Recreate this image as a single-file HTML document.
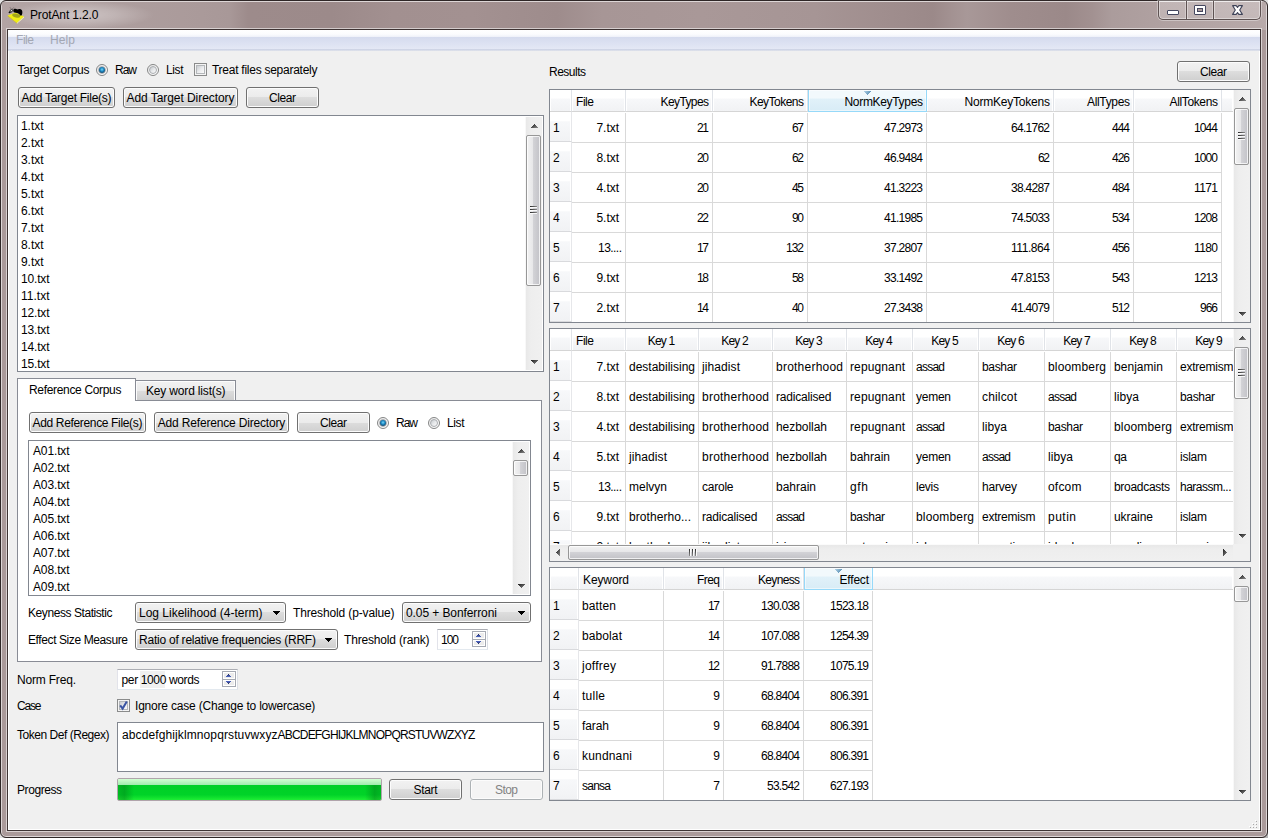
<!DOCTYPE html>
<html lang="en"><head><meta charset="utf-8"><title>ProtAnt 1.2.0</title>
<style>
html,body{margin:0;padding:0;}
body{width:1268px;height:838px;position:relative;overflow:hidden;background:#e2e2e2;font:12px/14px "Liberation Sans",sans-serif;color:#000;}
div,span,svg{position:absolute;box-sizing:border-box;}
.t{white-space:pre;line-height:14px;font-size:12px;}
/* window frame */
.frame{border:1px solid #2e2626;border-radius:6px;background:#aa9a9a;box-shadow:inset 0 0 0 1px rgba(255,255,255,.6);overflow:hidden;}
.tbar{background:linear-gradient(90deg,#b3a4a4 0px,#ae9f9f 100px,#aa9a9a 200px,#a89898 228px,#9d8b8b 246px,#9c8a8a 330px,#a29090 390px,#a39191 470px,#a08e8e 520px,#9e8c8c 555px,#a79696 600px,#a99898 700px,#a69595 813px,#a08e8e 880px,#9b8989 931px,#a39292 950px,#a89898 965px,#a49393 985px,#9f8d8d 1010px,#9b8989 1064px,#a29191 1090px,#ab9c9c 1110px,#b0a1a1 1160px,#b8aaaa 1268px);}
.client{background:#f0f0f0;border:1px solid #fff;box-shadow:0 0 0 1px #3e3434,0 0 0 2px rgba(255,255,255,.55);}
.menubar{background:linear-gradient(#fff 0,#fbfcfe 20%,#eef1f9 33%,#d5dbee 34%,#dde2f2 66%,#e4e8f5 90%,#bfc6da 95%,#f4f5f8 100%);}
.capbox{border:1px solid #5e5252;border-top:none;border-radius:0 0 5px 5px;background:linear-gradient(rgba(255,255,255,.22) 0,rgba(255,255,255,.18) 100%);background-clip:padding-box;box-shadow:inset 0 0 0 1px rgba(255,255,255,.4),0 0 0 1px rgba(255,255,255,.35);}
/* button */
.btn{border:1px solid #707070;border-radius:3px;background:linear-gradient(#f2f2f2 0,#ebebeb 50%,#dddddd 50%,#cfcfcf 100%);box-shadow:inset 0 0 0 1px #fcfcfc;}
.btn.dis{border-color:#adb2b5;background:#f4f4f4;box-shadow:inset 0 0 0 1px #fcfcfc;}
.list{border:1px solid #828790;background:#fff;}
.field{border:1px solid #e3e9ef;border-top-color:#abadb3;border-left-color:#e2e3ea;border-right-color:#dbdfe6;background:#fff;}
/* scrollbar */
.sbv{background:linear-gradient(90deg,#f8f8f8 0,#f8f8f8 1px,#e8e8e8 1px,#eeeeee 6px,#f0f0f0 100%);}
.sbh{background:linear-gradient(#f8f8f8 0,#f8f8f8 1px,#e8e8e8 1px,#eeeeee 6px,#f0f0f0 100%);}
.thv{border:1px solid #979797;border-radius:2px;background:linear-gradient(90deg,#f3f3f3 0,#e6e6e8 48%,#d2d2d6 50%,#c2c2c7 100%);box-shadow:inset 0 0 0 1px rgba(255,255,255,.75);}
.thh{border:1px solid #979797;border-radius:2px;background:linear-gradient(#f3f3f3 0,#e6e6e8 48%,#d2d2d6 50%,#c2c2c7 100%);box-shadow:inset 0 0 0 1px rgba(255,255,255,.75);}
/* tabs */
.pane{border:1px solid #898c95;background:#fff;}
.tabsel{border:1px solid #898c95;border-bottom:none;background:#fff;}
.tab{border:1px solid #898c95;border-bottom:none;background:linear-gradient(#f2f2f2 0,#ebebeb 50%,#dddddd 50%,#cfcfcf 100%);box-shadow:inset 1px 1px 0 0 #fcfcfc,inset -1px 0 0 0 #fcfcfc;}
/* table */
.tbl{border:1px solid #828790;background:#fff;overflow:hidden;}
.hd{background:linear-gradient(#fff 0,#fff 40%,#f7f8fa 41%,#f1f2f4 100%);border-right:1px solid #e0e3e8;border-bottom:1px solid #d5d5d5;box-shadow:inset -1px 0 0 0 #fff, inset 1px 0 0 0 #fff;}
.hdsel{background:linear-gradient(#f2f9fc 0,#f2f9fc 40%,#e1f1f9 41%,#d8ecf6 100%);border:1px solid #96d9f9;border-top:none;box-shadow:inset 0 0 0 1px rgba(255,255,255,.5);}
.rh{background:linear-gradient(#fff 0,#fff 32%,#f7f8fa 33%,#f1f2f4 100%);border-right:1px solid #e6e7ea;border-bottom:1px solid #d9dadd;box-shadow:inset -1px 0 0 0 #fff;}
.gv{background:#d9d9d9;width:1px;}
.gh{background:#d9d9d9;height:1px;}
.prog{border:1px solid #b0a4ab;border-radius:2px;background:#e6e6e6;overflow:hidden;}
.pf{left:0;top:0;right:0;bottom:0;background:linear-gradient(#d2ffd2 0,#b9f5bf 14%,#a4ebb0 27%,#00cf26 29%,#00d328 75%,#0fe02e 88%,#1fee35 100%);}
.pl{left:0;top:6px;width:16px;bottom:0;background:linear-gradient(90deg,rgba(0,110,20,.25),rgba(0,110,20,.4) 40%,rgba(0,110,20,0));}
.pr{right:0;top:6px;width:16px;bottom:0;background:linear-gradient(270deg,rgba(0,110,20,.25),rgba(0,110,20,.4) 40%,rgba(0,110,20,0));}

</style></head>
<body>
<svg width="0" height="0" style="left:0;top:0"><defs><linearGradient id="ag" x1="0" y1="0" x2="1" y2="1"><stop offset="0" stop-color="#1c1c1c"/><stop offset="1" stop-color="#8c8c8c"/></linearGradient><linearGradient id="sg" x1="0" y1="0" x2="0" y2="1"><stop offset="0" stop-color="#232a55"/><stop offset="1" stop-color="#4f6ad0"/></linearGradient><linearGradient id="sg2" x1="0" y1="0" x2="0" y2="1"><stop offset="0" stop-color="#4f6ad0"/><stop offset="1" stop-color="#232a55"/></linearGradient><linearGradient id="hg" x1="0" y1="0" x2="1" y2="0.4"><stop offset="0" stop-color="#b4d3e6"/><stop offset="1" stop-color="#5a90b6"/></linearGradient></defs></svg>
<div class="" style="left:1258px;top:828px;width:10px;height:10px;background:#b4b4b4;"></div>
<div class="frame" style="left:0px;top:0px;width:1268px;height:838px;"><div class="tbar" style="left:1px;top:1px;width:1264px;height:28px;"></div></div>
<div class="" style="left:2px;top:30px;width:4px;height:802px;background:#aa9a9a;"></div>
<div class="" style="left:1262px;top:30px;width:4px;height:802px;background:#aa9a9a;"></div>
<div class="" style="left:6px;top:832px;width:1256px;height:4px;background:#aa9a9a;"></div>
<div class="capbox" style="left:1158px;top:1px;width:103px;height:19px;"></div>
<div class="" style="left:1186px;top:1px;width:1px;height:18px;background:#5e5252;"></div>
<div class="" style="left:1187px;top:1px;width:1px;height:18px;background:rgba(255,255,255,.4);"></div>
<div class="" style="left:1185px;top:1px;width:1px;height:18px;background:rgba(255,255,255,.3);"></div>
<div class="" style="left:1213px;top:1px;width:1px;height:18px;background:#5e5252;"></div>
<div class="" style="left:1214px;top:1px;width:1px;height:18px;background:rgba(255,255,255,.4);"></div>
<div class="" style="left:1212px;top:1px;width:1px;height:18px;background:rgba(255,255,255,.3);"></div>
<div class="" style="left:1167px;top:10px;width:12px;height:5px;background:#fff;border:1px solid #45475e;border-radius:1px;"></div>
<div class="" style="left:1194px;top:5px;width:12px;height:10px;border:1px solid #45475e;border-radius:1px;background:#fff;"></div>
<div class="" style="left:1197px;top:8px;width:6px;height:4px;border:1px solid #45475e;background:#ac9c9c;"></div>
<svg style="left:1232px;top:5px" width="11" height="10" viewBox="0 0 11 10"><polygon points="0.6,0.6 4.2,0.6 5.5,2.5 6.8,0.6 10.4,0.6 7.7,5 10.4,9.4 6.8,9.4 5.5,7.5 4.2,9.4 0.6,9.4 3.3,5" fill="#fff" stroke="#3f4358" stroke-width="1.1" stroke-linejoin="round"/></svg>
<div class="" style="left:4px;top:1px;width:150px;height:28px;background:radial-gradient(closest-side,rgba(255,255,255,.38) 0,rgba(255,255,255,.22) 50%,rgba(255,255,255,0) 100%);"></div>
<svg style="left:4px;top:3px" width="26" height="24" viewBox="0 0 26 24"><defs><filter id="ib" x="-20%" y="-20%" width="140%" height="140%"><feGaussianBlur stdDeviation="0.35"/></filter></defs><g filter="url(#ib)"><polygon points="3.7,12.6 11.5,9.6 20,13.4 12.9,19.9" fill="#f0ee18"/><polygon points="3.7,12.6 12.9,19.9 12.9,20.6 3.7,13.3" fill="#d8c010"/><polygon points="12.9,19.9 20,13.4 20,14.6 12.9,20.8" fill="#f3ef9a"/><ellipse cx="12.2" cy="12.7" rx="4.1" ry="1.9" transform="rotate(12 12.2 12.7)" fill="#a3a61e"/><path d="M9.3 7.2 C9.6 5.6 12 5.4 13.2 6.6 C14.6 5.6 17.6 5.8 18.2 8 C18.6 9.6 18.2 11.6 17.6 12.4 L16.2 12.4 C15.4 10.8 13.6 10 11.6 9.8 C10 9.6 9.1 8.6 9.3 7.2Z" fill="#050505"/><ellipse cx="7.1" cy="8" rx="2.4" ry="1.5" transform="rotate(-42 7.1 8)" fill="#3a3a3a"/><ellipse cx="7.4" cy="7.6" rx="1.1" ry="0.55" transform="rotate(-42 7.4 7.6)" fill="#e8e8e8"/><circle cx="5.4" cy="9.4" r="0.75" fill="#0a0a0a"/><path d="M7.6 6.4 L6 4.3 M8.4 6 L9.6 4.5" stroke="#4a4040" stroke-width="0.5" fill="none"/></g><path d="M13.6 19.9 L19.6 14.4" stroke="#fff" stroke-width="0.7" stroke-dasharray="0.7 1.1" fill="none" opacity=".9"/></svg>
<span class="t" style="left:30px;top:8px;letter-spacing:-0.13px;">ProtAnt 1.2.0</span>
<div class="client" style="left:8px;top:30px;width:1252px;height:800px;"></div>
<div class="menubar" style="left:8px;top:30px;width:1252px;height:21px;"></div>
<span class="t" style="left:16px;top:33px;letter-spacing:-0.45px;color:#a3a7b3;">File</span>
<span class="t" style="left:50px;top:33px;letter-spacing:0.1px;color:#a3a7b3;">Help</span>
<span class="t" style="left:17.5px;top:63px;letter-spacing:-0.28px;">Target Corpus</span>
<div class="" style="left:96px;top:64px;width:12px;height:12px;border-radius:50%;border:1px solid #858686;background:linear-gradient(135deg,#e8e8e8 0,#f6f6f6 50%,#ffffff 100%);"></div>
<div class="" style="left:98px;top:66px;width:8px;height:8px;border-radius:50%;border:1px solid #a9acb0;background:linear-gradient(135deg,#c4c8cc 0,#e6e8ea 50%,#fbfbfb 100%);"></div>
<div class="" style="left:99px;top:67px;width:6px;height:6px;border-radius:50%;background:radial-gradient(circle at 50% 42%,#79d6f8 0,#1f8cc6 38%,#103f62 78%,#0b2c45 100%);"></div>
<span class="t" style="left:115px;top:63px;letter-spacing:-1.01px;">Raw</span>
<div class="" style="left:147px;top:64px;width:12px;height:12px;border-radius:50%;border:1px solid #858686;background:linear-gradient(135deg,#e8e8e8 0,#f6f6f6 50%,#ffffff 100%);"></div>
<div class="" style="left:149px;top:66px;width:8px;height:8px;border-radius:50%;border:1px solid #a9acb0;background:linear-gradient(135deg,#c4c8cc 0,#e6e8ea 50%,#fbfbfb 100%);"></div>
<span class="t" style="left:166px;top:63px;letter-spacing:-0.4px;">List</span>
<div class="" style="left:194px;top:63px;width:13px;height:13px;border:1px solid #8a8b8b;background:#f4f4f4;"></div>
<div class="" style="left:196px;top:65px;width:9px;height:9px;border:1px solid #b4b7ba;background:linear-gradient(135deg,#c9ccd0 0,#e9eaec 50%,#fbfbfb 100%);"></div>
<span class="t" style="left:212px;top:63px;letter-spacing:-0.26px;">Treat files separately</span>
<div class="btn" style="left:18px;top:87px;width:97px;height:21px;"></div>
<span class="t" style="left:21.5px;top:91px;letter-spacing:-0.26px;">Add Target File(s)</span>
<div class="btn" style="left:123px;top:87px;width:115px;height:21px;"></div>
<span class="t" style="left:126.5px;top:91px;letter-spacing:-0.06px;">Add Target Directory</span>
<div class="btn" style="left:246px;top:87px;width:73px;height:21px;"></div>
<span class="t" style="left:269.0px;top:91px;letter-spacing:-0.42px;">Clear</span>
<div class="list" style="left:17px;top:115px;width:527px;height:257px;"></div>
<span class="t" style="left:21px;top:119px;letter-spacing:-0.05px;">1.txt</span>
<span class="t" style="left:21px;top:136px;letter-spacing:-0.05px;">2.txt</span>
<span class="t" style="left:21px;top:153px;letter-spacing:-0.05px;">3.txt</span>
<span class="t" style="left:21px;top:170px;letter-spacing:-0.05px;">4.txt</span>
<span class="t" style="left:21px;top:187px;letter-spacing:-0.05px;">5.txt</span>
<span class="t" style="left:21px;top:204px;letter-spacing:-0.05px;">6.txt</span>
<span class="t" style="left:21px;top:221px;letter-spacing:-0.05px;">7.txt</span>
<span class="t" style="left:21px;top:238px;letter-spacing:-0.05px;">8.txt</span>
<span class="t" style="left:21px;top:255px;letter-spacing:-0.05px;">9.txt</span>
<span class="t" style="left:21px;top:272px;letter-spacing:-0.17px;">10.txt</span>
<span class="t" style="left:21px;top:289px;letter-spacing:0.01px;">11.txt</span>
<span class="t" style="left:21px;top:306px;letter-spacing:-0.17px;">12.txt</span>
<span class="t" style="left:21px;top:323px;letter-spacing:-0.17px;">13.txt</span>
<span class="t" style="left:21px;top:340px;letter-spacing:-0.17px;">14.txt</span>
<span class="t" style="left:21px;top:357px;letter-spacing:-0.17px;">15.txt</span>
<div class="sbv" style="left:525px;top:117px;width:17px;height:253px;"></div>
<svg style="left:531px;top:124px" width="7" height="4" viewBox="0 0 7 4" shape-rendering="crispEdges"><path d="M3 0h1v1h-1z M2 1h3v1h-3z M1 2h5v1h-5z M0 3h7v1h-7z" fill="url(#ag)"/></svg>
<svg style="left:531px;top:360px" width="7" height="4" viewBox="0 0 7 4" shape-rendering="crispEdges"><path d="M0 0h7v1h-7z M1 1h5v1h-5z M2 2h3v1h-3z M3 3h1v1h-1z" fill="url(#ag)"/></svg>
<div class="thv" style="left:526px;top:135px;width:15px;height:151px;"></div>
<div class="" style="left:530px;top:206px;width:7px;height:1px;background:linear-gradient(90deg,#2a2a2a,#8a8a8a);"></div>
<div class="" style="left:530px;top:207px;width:7px;height:1px;background:rgba(255,255,255,.85);"></div>
<div class="" style="left:530px;top:209px;width:7px;height:1px;background:linear-gradient(90deg,#2a2a2a,#8a8a8a);"></div>
<div class="" style="left:530px;top:210px;width:7px;height:1px;background:rgba(255,255,255,.85);"></div>
<div class="" style="left:530px;top:212px;width:7px;height:1px;background:linear-gradient(90deg,#2a2a2a,#8a8a8a);"></div>
<div class="" style="left:530px;top:213px;width:7px;height:1px;background:rgba(255,255,255,.85);"></div>
<div class="pane" style="left:17px;top:400px;width:525px;height:262px;"></div>
<div class="tabsel" style="left:17px;top:378px;width:119px;height:23px;"></div>
<div class="tab" style="left:135px;top:380px;width:101px;height:20px;"></div>
<span class="t" style="left:29px;top:383px;letter-spacing:-0.33px;">Reference Corpus</span>
<span class="t" style="left:146px;top:384px;letter-spacing:-0.17px;">Key word list(s)</span>
<div class="btn" style="left:29px;top:412px;width:117px;height:21px;"></div>
<span class="t" style="left:32.5px;top:416px;letter-spacing:-0.34px;">Add Reference File(s)</span>
<div class="btn" style="left:154px;top:412px;width:135px;height:21px;"></div>
<span class="t" style="left:157.8px;top:416px;letter-spacing:-0.18px;">Add Reference Directory</span>
<div class="btn" style="left:297px;top:412px;width:73px;height:21px;"></div>
<span class="t" style="left:320.0px;top:416px;letter-spacing:-0.42px;">Clear</span>
<div class="" style="left:377px;top:417px;width:12px;height:12px;border-radius:50%;border:1px solid #858686;background:linear-gradient(135deg,#e8e8e8 0,#f6f6f6 50%,#ffffff 100%);"></div>
<div class="" style="left:379px;top:419px;width:8px;height:8px;border-radius:50%;border:1px solid #a9acb0;background:linear-gradient(135deg,#c4c8cc 0,#e6e8ea 50%,#fbfbfb 100%);"></div>
<div class="" style="left:380px;top:420px;width:6px;height:6px;border-radius:50%;background:radial-gradient(circle at 50% 42%,#79d6f8 0,#1f8cc6 38%,#103f62 78%,#0b2c45 100%);"></div>
<span class="t" style="left:396px;top:416px;letter-spacing:-1.01px;">Raw</span>
<div class="" style="left:428px;top:417px;width:12px;height:12px;border-radius:50%;border:1px solid #858686;background:linear-gradient(135deg,#e8e8e8 0,#f6f6f6 50%,#ffffff 100%);"></div>
<div class="" style="left:430px;top:419px;width:8px;height:8px;border-radius:50%;border:1px solid #a9acb0;background:linear-gradient(135deg,#c4c8cc 0,#e6e8ea 50%,#fbfbfb 100%);"></div>
<span class="t" style="left:447px;top:416px;letter-spacing:-0.4px;">List</span>
<div class="list" style="left:28px;top:440px;width:503px;height:156px;"></div>
<span class="t" style="left:33px;top:444px;letter-spacing:-0.14px;">A01.txt</span>
<span class="t" style="left:33px;top:461px;letter-spacing:-0.14px;">A02.txt</span>
<span class="t" style="left:33px;top:478px;letter-spacing:-0.14px;">A03.txt</span>
<span class="t" style="left:33px;top:495px;letter-spacing:-0.14px;">A04.txt</span>
<span class="t" style="left:33px;top:512px;letter-spacing:-0.14px;">A05.txt</span>
<span class="t" style="left:33px;top:529px;letter-spacing:-0.14px;">A06.txt</span>
<span class="t" style="left:33px;top:546px;letter-spacing:-0.14px;">A07.txt</span>
<span class="t" style="left:33px;top:563px;letter-spacing:-0.14px;">A08.txt</span>
<span class="t" style="left:33px;top:580px;letter-spacing:-0.14px;">A09.txt</span>
<div class="sbv" style="left:512px;top:442px;width:17px;height:152px;"></div>
<svg style="left:518px;top:449px" width="7" height="4" viewBox="0 0 7 4" shape-rendering="crispEdges"><path d="M3 0h1v1h-1z M2 1h3v1h-3z M1 2h5v1h-5z M0 3h7v1h-7z" fill="url(#ag)"/></svg>
<svg style="left:518px;top:584px" width="7" height="4" viewBox="0 0 7 4" shape-rendering="crispEdges"><path d="M0 0h7v1h-7z M1 1h5v1h-5z M2 2h3v1h-3z M3 3h1v1h-1z" fill="url(#ag)"/></svg>
<div class="thv" style="left:513px;top:460px;width:15px;height:16px;"></div>
<span class="t" style="left:28px;top:606px;letter-spacing:-0.43px;">Keyness Statistic</span>
<div class="btn" style="left:135px;top:602px;width:151px;height:21px;"></div>
<span class="t" style="left:139px;top:606px;">Log Likelihood (4-term)</span>
<svg style="left:273px;top:611px" width="7" height="4" viewBox="0 0 7 4" shape-rendering="crispEdges"><path d="M0 0h7v1h-7z M1 1h5v1h-5z M2 2h3v1h-3z M3 3h1v1h-1z" fill="#000"/></svg>
<span class="t" style="left:293px;top:606px;letter-spacing:-0.14px;">Threshold (p-value)</span>
<div class="btn" style="left:402px;top:602px;width:129px;height:21px;"></div>
<span class="t" style="left:406px;top:606px;letter-spacing:-0.09px;">0.05 + Bonferroni</span>
<svg style="left:518px;top:611px" width="7" height="4" viewBox="0 0 7 4" shape-rendering="crispEdges"><path d="M0 0h7v1h-7z M1 1h5v1h-5z M2 2h3v1h-3z M3 3h1v1h-1z" fill="#000"/></svg>
<span class="t" style="left:28px;top:633px;letter-spacing:-0.4px;">Effect Size Measure</span>
<div class="btn" style="left:135px;top:629px;width:203px;height:21px;"></div>
<span class="t" style="left:139px;top:633px;letter-spacing:-0.23px;">Ratio of relative frequencies (RRF)</span>
<svg style="left:325px;top:638px" width="7" height="4" viewBox="0 0 7 4" shape-rendering="crispEdges"><path d="M0 0h7v1h-7z M1 1h5v1h-5z M2 2h3v1h-3z M3 3h1v1h-1z" fill="#000"/></svg>
<span class="t" style="left:344px;top:633px;letter-spacing:-0.17px;">Threshold (rank)</span>
<div class="field" style="left:437px;top:629px;width:51px;height:21px;"></div>
<div class="" style="left:472px;top:631px;width:14px;height:9px;border:1px solid #a5a9b2;background:#ececec;box-shadow:inset 0 0 0 1px #fff;"></div>
<div class="" style="left:472px;top:639px;width:14px;height:8px;border:1px solid #a5a9b2;background:#ececec;box-shadow:inset 0 0 0 1px #fff;"></div>
<svg style="left:476px;top:634px" width="5" height="3" viewBox="0 0 5 3" shape-rendering="crispEdges"><path d="M2 0h1v1h-1z M1 1h3v1h-3z M0 2h5v1h-5z" fill="url(#sg)"/></svg>
<svg style="left:476px;top:641px" width="5" height="3" viewBox="0 0 5 3" shape-rendering="crispEdges"><path d="M0 0h5v1h-5z M1 1h3v1h-3z M2 2h1v1h-1z" fill="url(#sg2)"/></svg>
<span class="t" style="left:441px;top:633px;letter-spacing:-1.02px;">100</span>
<span class="t" style="left:17px;top:673px;letter-spacing:-0.19px;">Norm Freq.</span>
<div class="field" style="left:117px;top:669px;width:121px;height:21px;"></div>
<div class="" style="left:222px;top:671px;width:14px;height:9px;border:1px solid #a5a9b2;background:#ececec;box-shadow:inset 0 0 0 1px #fff;"></div>
<div class="" style="left:222px;top:679px;width:14px;height:8px;border:1px solid #a5a9b2;background:#ececec;box-shadow:inset 0 0 0 1px #fff;"></div>
<svg style="left:226px;top:674px" width="5" height="3" viewBox="0 0 5 3" shape-rendering="crispEdges"><path d="M2 0h1v1h-1z M1 1h3v1h-3z M0 2h5v1h-5z" fill="url(#sg)"/></svg>
<svg style="left:226px;top:681px" width="5" height="3" viewBox="0 0 5 3" shape-rendering="crispEdges"><path d="M0 0h5v1h-5z M1 1h3v1h-3z M2 2h1v1h-1z" fill="url(#sg2)"/></svg>
<div class="" style="left:140px;top:671px;width:25px;height:17px;background:#f0f0f0;"></div>
<span class="t" style="left:121.5px;top:673px;letter-spacing:-0.36px;">per 1000 words</span>
<span class="t" style="left:17px;top:699px;letter-spacing:-1.17px;">Case</span>
<div class="" style="left:117px;top:699px;width:13px;height:13px;border:1px solid #8a8b8b;background:#f4f4f4;"></div>
<div class="" style="left:119px;top:701px;width:9px;height:9px;border:1px solid #b4b7ba;background:linear-gradient(135deg,#c9ccd0 0,#e9eaec 50%,#fbfbfb 100%);"></div>
<svg style="left:117px;top:699px" width="13" height="13" viewBox="0 0 13 13"><path d="M3.2 6.4 L5.6 9.6 L9.8 2.6" fill="none" stroke="#3b55a3" stroke-width="2"/></svg>
<span class="t" style="left:135px;top:699px;letter-spacing:-0.2px;">Ignore case (Change to lowercase)</span>
<span class="t" style="left:17px;top:728px;letter-spacing:-0.47px;">Token Def (Regex)</span>
<div class="list" style="left:117px;top:722px;width:427px;height:50px;"></div>
<span class="t" style="left:122px;top:728px;letter-spacing:0.11px;">abcdefghijklmnopqrstuvwxyz</span>
<span class="t" style="left:277.5px;top:728px;letter-spacing:-0.8px;">ABCDEFGHIJKLMNOPQRSTUVWZXYZ</span>
<span class="t" style="left:17px;top:783px;letter-spacing:-0.43px;">Progress</span>
<div class="prog" style="left:117px;top:778px;width:265px;height:23px;"><div class="pf"></div><div class="pl"></div><div class="pr"></div></div>
<div class="btn" style="left:389px;top:779px;width:73px;height:21px;"></div>
<span class="t" style="left:413.5px;top:783px;letter-spacing:-0.34px;">Start</span>
<div class="btn dis" style="left:470px;top:779px;width:73px;height:21px;"></div>
<span class="t" style="left:495.0px;top:783px;letter-spacing:-0.56px;color:#838383;">Stop</span>
<span class="t" style="left:549px;top:65px;letter-spacing:-0.5px;">Results</span>
<div class="btn" style="left:1177px;top:61px;width:73px;height:21px;"></div>
<span class="t" style="left:1200.0px;top:65px;letter-spacing:-0.42px;">Clear</span>
<div class="tbl" style="left:549px;top:89px;width:702px;height:234px;"></div>
<div style="left:550px;top:90px;width:683px;height:232px;overflow:hidden;">
<div class="hd" style="left:0px;top:0px;width:683px;height:22px;border-right:none;"></div>
<div class="hd" style="left:0px;top:0px;width:22px;height:22px;"></div>
<div class="hd" style="left:22px;top:0px;width:54px;height:22px;"></div>
<div class="hd" style="left:76px;top:0px;width:87px;height:22px;"></div>
<div class="hd" style="left:163px;top:0px;width:95px;height:22px;"></div>
<div class="hdsel" style="left:258px;top:0px;width:119px;height:22px;"></div>
<svg style="left:314px;top:1px" width="7" height="4" viewBox="0 0 7 4" shape-rendering="crispEdges"><path d="M0 0h7v1h-7z M1 1h5v1h-5z M2 2h3v1h-3z M3 3h1v1h-1z" fill="url(#hg)"/></svg>
<div class="hd" style="left:377px;top:0px;width:127px;height:22px;"></div>
<div class="hd" style="left:504px;top:0px;width:80px;height:22px;"></div>
<div class="hd" style="left:584px;top:0px;width:88px;height:22px;"></div>
<div class="rh" style="left:0px;top:22px;width:22px;height:30px;"></div>
<div class="gh" style="left:22px;top:52px;width:650px;height:1px;"></div>
<div class="rh" style="left:0px;top:52px;width:22px;height:30px;"></div>
<div class="gh" style="left:22px;top:82px;width:650px;height:1px;"></div>
<div class="rh" style="left:0px;top:82px;width:22px;height:30px;"></div>
<div class="gh" style="left:22px;top:112px;width:650px;height:1px;"></div>
<div class="rh" style="left:0px;top:112px;width:22px;height:30px;"></div>
<div class="gh" style="left:22px;top:142px;width:650px;height:1px;"></div>
<div class="rh" style="left:0px;top:142px;width:22px;height:30px;"></div>
<div class="gh" style="left:22px;top:172px;width:650px;height:1px;"></div>
<div class="rh" style="left:0px;top:172px;width:22px;height:30px;"></div>
<div class="gh" style="left:22px;top:202px;width:650px;height:1px;"></div>
<div class="rh" style="left:0px;top:202px;width:22px;height:30px;"></div>
<div class="gh" style="left:22px;top:232px;width:650px;height:1px;"></div>
<div class="gv" style="left:75px;top:23px;width:1px;height:210px;"></div>
<div class="gv" style="left:162px;top:23px;width:1px;height:210px;"></div>
<div class="gv" style="left:257px;top:23px;width:1px;height:210px;"></div>
<div class="gv" style="left:376px;top:23px;width:1px;height:210px;"></div>
<div class="gv" style="left:503px;top:23px;width:1px;height:210px;"></div>
<div class="gv" style="left:583px;top:23px;width:1px;height:210px;"></div>
<div class="gv" style="left:671px;top:23px;width:1px;height:210px;"></div>
<span class="t" style="left:26px;top:5px;letter-spacing:-0.45px;">File</span>
<span class="t" style="left:110.5px;top:5px;letter-spacing:-0.6px;">KeyTypes</span>
<span class="t" style="left:199.5px;top:5px;letter-spacing:-0.53px;">KeyTokens</span>
<span class="t" style="left:294.5px;top:5px;letter-spacing:-0.32px;">NormKeyTypes</span>
<span class="t" style="left:414.5px;top:5px;letter-spacing:-0.21px;">NormKeyTokens</span>
<span class="t" style="left:537.0px;top:5px;letter-spacing:-0.34px;">AllTypes</span>
<span class="t" style="left:619.5px;top:5px;letter-spacing:-0.36px;">AllTokens</span>
<span class="t" style="left:3px;top:31px;">1</span>
<span class="t" style="left:46.5px;top:31px;letter-spacing:-0.05px;">7.txt</span>
<span class="t" style="left:147.0px;top:31px;letter-spacing:-1.36px;">21</span>
<span class="t" style="left:242.0px;top:31px;letter-spacing:-1.36px;">67</span>
<span class="t" style="left:334.0px;top:31px;letter-spacing:-0.73px;">47.2973</span>
<span class="t" style="left:461.0px;top:31px;letter-spacing:-0.73px;">64.1762</span>
<span class="t" style="left:562.0px;top:31px;letter-spacing:-1.02px;">444</span>
<span class="t" style="left:644.0px;top:31px;letter-spacing:-0.9px;">1044</span>
<span class="t" style="left:3px;top:61px;">2</span>
<span class="t" style="left:46.5px;top:61px;letter-spacing:-0.05px;">8.txt</span>
<span class="t" style="left:147.0px;top:61px;letter-spacing:-1.36px;">20</span>
<span class="t" style="left:242.0px;top:61px;letter-spacing:-1.36px;">62</span>
<span class="t" style="left:334.0px;top:61px;letter-spacing:-0.73px;">46.9484</span>
<span class="t" style="left:488.0px;top:61px;letter-spacing:-1.36px;">62</span>
<span class="t" style="left:562.0px;top:61px;letter-spacing:-1.02px;">426</span>
<span class="t" style="left:644.0px;top:61px;letter-spacing:-0.9px;">1000</span>
<span class="t" style="left:3px;top:91px;">3</span>
<span class="t" style="left:46.5px;top:91px;letter-spacing:-0.05px;">4.txt</span>
<span class="t" style="left:147.0px;top:91px;letter-spacing:-1.36px;">20</span>
<span class="t" style="left:242.0px;top:91px;letter-spacing:-1.36px;">45</span>
<span class="t" style="left:334.0px;top:91px;letter-spacing:-0.73px;">41.3223</span>
<span class="t" style="left:461.0px;top:91px;letter-spacing:-0.73px;">38.4287</span>
<span class="t" style="left:562.0px;top:91px;letter-spacing:-1.02px;">484</span>
<span class="t" style="left:644.0px;top:91px;letter-spacing:-0.6px;">1171</span>
<span class="t" style="left:3px;top:121px;">4</span>
<span class="t" style="left:46.5px;top:121px;letter-spacing:-0.05px;">5.txt</span>
<span class="t" style="left:147.0px;top:121px;letter-spacing:-1.36px;">22</span>
<span class="t" style="left:242.0px;top:121px;letter-spacing:-1.36px;">90</span>
<span class="t" style="left:334.0px;top:121px;letter-spacing:-0.73px;">41.1985</span>
<span class="t" style="left:461.0px;top:121px;letter-spacing:-0.73px;">74.5033</span>
<span class="t" style="left:562.0px;top:121px;letter-spacing:-1.02px;">534</span>
<span class="t" style="left:644.0px;top:121px;letter-spacing:-0.9px;">1208</span>
<span class="t" style="left:3px;top:151px;">5</span>
<span class="t" style="left:48.0px;top:151px;letter-spacing:-0.54px;">13....</span>
<span class="t" style="left:147.0px;top:151px;letter-spacing:-1.36px;">17</span>
<span class="t" style="left:236.0px;top:151px;letter-spacing:-1.02px;">132</span>
<span class="t" style="left:334.0px;top:151px;letter-spacing:-0.73px;">37.2807</span>
<span class="t" style="left:461.0px;top:151px;letter-spacing:-0.43px;">111.864</span>
<span class="t" style="left:562.0px;top:151px;letter-spacing:-1.02px;">456</span>
<span class="t" style="left:644.0px;top:151px;letter-spacing:-0.6px;">1180</span>
<span class="t" style="left:3px;top:181px;">6</span>
<span class="t" style="left:46.5px;top:181px;letter-spacing:-0.05px;">9.txt</span>
<span class="t" style="left:147.0px;top:181px;letter-spacing:-1.36px;">18</span>
<span class="t" style="left:242.0px;top:181px;letter-spacing:-1.36px;">58</span>
<span class="t" style="left:334.0px;top:181px;letter-spacing:-0.73px;">33.1492</span>
<span class="t" style="left:461.0px;top:181px;letter-spacing:-0.73px;">47.8153</span>
<span class="t" style="left:562.0px;top:181px;letter-spacing:-1.02px;">543</span>
<span class="t" style="left:644.0px;top:181px;letter-spacing:-0.9px;">1213</span>
<span class="t" style="left:3px;top:211px;">7</span>
<span class="t" style="left:46.5px;top:211px;letter-spacing:-0.05px;">2.txt</span>
<span class="t" style="left:147.0px;top:211px;letter-spacing:-1.36px;">14</span>
<span class="t" style="left:242.0px;top:211px;letter-spacing:-1.36px;">40</span>
<span class="t" style="left:334.0px;top:211px;letter-spacing:-0.73px;">27.3438</span>
<span class="t" style="left:461.0px;top:211px;letter-spacing:-0.73px;">41.4079</span>
<span class="t" style="left:562.0px;top:211px;letter-spacing:-1.02px;">512</span>
<span class="t" style="left:650.0px;top:211px;letter-spacing:-1.02px;">966</span>
</div>
<div class="sbv" style="left:1233px;top:90px;width:17px;height:232px;"></div>
<svg style="left:1239px;top:97px" width="7" height="4" viewBox="0 0 7 4" shape-rendering="crispEdges"><path d="M3 0h1v1h-1z M2 1h3v1h-3z M1 2h5v1h-5z M0 3h7v1h-7z" fill="url(#ag)"/></svg>
<svg style="left:1239px;top:312px" width="7" height="4" viewBox="0 0 7 4" shape-rendering="crispEdges"><path d="M0 0h7v1h-7z M1 1h5v1h-5z M2 2h3v1h-3z M3 3h1v1h-1z" fill="url(#ag)"/></svg>
<div class="thv" style="left:1234px;top:108px;width:15px;height:57px;"></div>
<div class="" style="left:1238px;top:132px;width:7px;height:1px;background:linear-gradient(90deg,#2a2a2a,#8a8a8a);"></div>
<div class="" style="left:1238px;top:133px;width:7px;height:1px;background:rgba(255,255,255,.85);"></div>
<div class="" style="left:1238px;top:135px;width:7px;height:1px;background:linear-gradient(90deg,#2a2a2a,#8a8a8a);"></div>
<div class="" style="left:1238px;top:136px;width:7px;height:1px;background:rgba(255,255,255,.85);"></div>
<div class="" style="left:1238px;top:138px;width:7px;height:1px;background:linear-gradient(90deg,#2a2a2a,#8a8a8a);"></div>
<div class="" style="left:1238px;top:139px;width:7px;height:1px;background:rgba(255,255,255,.85);"></div>
<div class="tbl" style="left:549px;top:328px;width:702px;height:234px;"></div>
<div style="left:550px;top:329px;width:683px;height:215px;overflow:hidden;">
<div class="hd" style="left:0px;top:0px;width:683px;height:22px;border-right:none;"></div>
<div class="hd" style="left:0px;top:0px;width:22px;height:22px;"></div>
<div class="hd" style="left:22px;top:0px;width:54px;height:22px;"></div>
<div class="hd" style="left:76px;top:0px;width:73px;height:22px;"></div>
<div class="hd" style="left:149px;top:0px;width:74px;height:22px;"></div>
<div class="hd" style="left:223px;top:0px;width:74px;height:22px;"></div>
<div class="hd" style="left:297px;top:0px;width:66px;height:22px;"></div>
<div class="hd" style="left:363px;top:0px;width:66px;height:22px;"></div>
<div class="hd" style="left:429px;top:0px;width:66px;height:22px;"></div>
<div class="hd" style="left:495px;top:0px;width:66px;height:22px;"></div>
<div class="hd" style="left:561px;top:0px;width:66px;height:22px;"></div>
<div class="hd" style="left:627px;top:0px;width:66px;height:22px;"></div>
<div class="rh" style="left:0px;top:22px;width:22px;height:30px;"></div>
<div class="gh" style="left:22px;top:52px;width:671px;height:1px;"></div>
<div class="rh" style="left:0px;top:52px;width:22px;height:30px;"></div>
<div class="gh" style="left:22px;top:82px;width:671px;height:1px;"></div>
<div class="rh" style="left:0px;top:82px;width:22px;height:30px;"></div>
<div class="gh" style="left:22px;top:112px;width:671px;height:1px;"></div>
<div class="rh" style="left:0px;top:112px;width:22px;height:30px;"></div>
<div class="gh" style="left:22px;top:142px;width:671px;height:1px;"></div>
<div class="rh" style="left:0px;top:142px;width:22px;height:30px;"></div>
<div class="gh" style="left:22px;top:172px;width:671px;height:1px;"></div>
<div class="rh" style="left:0px;top:172px;width:22px;height:30px;"></div>
<div class="gh" style="left:22px;top:202px;width:671px;height:1px;"></div>
<div class="rh" style="left:0px;top:202px;width:22px;height:30px;"></div>
<div class="gh" style="left:22px;top:232px;width:671px;height:1px;"></div>
<div class="gv" style="left:75px;top:23px;width:1px;height:210px;"></div>
<div class="gv" style="left:148px;top:23px;width:1px;height:210px;"></div>
<div class="gv" style="left:222px;top:23px;width:1px;height:210px;"></div>
<div class="gv" style="left:296px;top:23px;width:1px;height:210px;"></div>
<div class="gv" style="left:362px;top:23px;width:1px;height:210px;"></div>
<div class="gv" style="left:428px;top:23px;width:1px;height:210px;"></div>
<div class="gv" style="left:494px;top:23px;width:1px;height:210px;"></div>
<div class="gv" style="left:560px;top:23px;width:1px;height:210px;"></div>
<div class="gv" style="left:626px;top:23px;width:1px;height:210px;"></div>
<div class="gv" style="left:692px;top:23px;width:1px;height:210px;"></div>
<span class="t" style="left:26px;top:5px;letter-spacing:-0.45px;">File</span>
<span class="t" style="left:97.8px;top:5px;letter-spacing:-0.8px;">Key 1</span>
<span class="t" style="left:171.3px;top:5px;letter-spacing:-0.8px;">Key 2</span>
<span class="t" style="left:245.3px;top:5px;letter-spacing:-0.8px;">Key 3</span>
<span class="t" style="left:315.3px;top:5px;letter-spacing:-0.8px;">Key 4</span>
<span class="t" style="left:381.3px;top:5px;letter-spacing:-0.8px;">Key 5</span>
<span class="t" style="left:447.3px;top:5px;letter-spacing:-0.8px;">Key 6</span>
<span class="t" style="left:513.3px;top:5px;letter-spacing:-0.8px;">Key 7</span>
<span class="t" style="left:579.3px;top:5px;letter-spacing:-0.8px;">Key 8</span>
<span class="t" style="left:645.3px;top:5px;letter-spacing:-0.8px;">Key 9</span>
<span class="t" style="left:3px;top:31px;">1</span>
<span class="t" style="left:46.5px;top:31px;letter-spacing:-0.05px;">7.txt</span>
<span class="t" style="left:79px;top:31px;">destabilising</span>
<span class="t" style="left:152px;top:31px;letter-spacing:0.09px;">jihadist</span>
<span class="t" style="left:226px;top:31px;letter-spacing:0.23px;">brotherhood</span>
<span class="t" style="left:300px;top:31px;letter-spacing:0.12px;">repugnant</span>
<span class="t" style="left:366px;top:31px;letter-spacing:-0.76px;">assad</span>
<span class="t" style="left:432px;top:31px;letter-spacing:-0.34px;">bashar</span>
<span class="t" style="left:498px;top:31px;letter-spacing:0.16px;">bloomberg</span>
<span class="t" style="left:564px;top:31px;letter-spacing:0.04px;">benjamin</span>
<span class="t" style="left:630px;top:31px;letter-spacing:-0.23px;">extremism</span>
<span class="t" style="left:3px;top:61px;">2</span>
<span class="t" style="left:46.5px;top:61px;letter-spacing:-0.05px;">8.txt</span>
<span class="t" style="left:79px;top:61px;">destabilising</span>
<span class="t" style="left:152px;top:61px;letter-spacing:0.23px;">brotherhood</span>
<span class="t" style="left:226px;top:61px;letter-spacing:-0.19px;">radicalised</span>
<span class="t" style="left:300px;top:61px;letter-spacing:0.12px;">repugnant</span>
<span class="t" style="left:366px;top:61px;letter-spacing:-0.26px;">yemen</span>
<span class="t" style="left:432px;top:61px;letter-spacing:0.16px;">chilcot</span>
<span class="t" style="left:498px;top:61px;letter-spacing:-0.76px;">assad</span>
<span class="t" style="left:564px;top:61px;letter-spacing:0.08px;">libya</span>
<span class="t" style="left:630px;top:61px;letter-spacing:-0.34px;">bashar</span>
<span class="t" style="left:3px;top:91px;">3</span>
<span class="t" style="left:46.5px;top:91px;letter-spacing:-0.05px;">4.txt</span>
<span class="t" style="left:79px;top:91px;">destabilising</span>
<span class="t" style="left:152px;top:91px;letter-spacing:0.23px;">brotherhood</span>
<span class="t" style="left:226px;top:91px;letter-spacing:-0.05px;">hezbollah</span>
<span class="t" style="left:300px;top:91px;letter-spacing:0.12px;">repugnant</span>
<span class="t" style="left:366px;top:91px;letter-spacing:-0.76px;">assad</span>
<span class="t" style="left:432px;top:91px;letter-spacing:0.08px;">libya</span>
<span class="t" style="left:498px;top:91px;letter-spacing:-0.34px;">bashar</span>
<span class="t" style="left:564px;top:91px;letter-spacing:0.16px;">bloomberg</span>
<span class="t" style="left:630px;top:91px;letter-spacing:-0.23px;">extremism</span>
<span class="t" style="left:3px;top:121px;">4</span>
<span class="t" style="left:46.5px;top:121px;letter-spacing:-0.05px;">5.txt</span>
<span class="t" style="left:79px;top:121px;letter-spacing:0.09px;">jihadist</span>
<span class="t" style="left:152px;top:121px;letter-spacing:0.23px;">brotherhood</span>
<span class="t" style="left:226px;top:121px;letter-spacing:-0.05px;">hezbollah</span>
<span class="t" style="left:300px;top:121px;letter-spacing:-0.01px;">bahrain</span>
<span class="t" style="left:366px;top:121px;letter-spacing:-0.26px;">yemen</span>
<span class="t" style="left:432px;top:121px;letter-spacing:-0.76px;">assad</span>
<span class="t" style="left:498px;top:121px;letter-spacing:0.08px;">libya</span>
<span class="t" style="left:564px;top:121px;letter-spacing:-0.36px;">qa</span>
<span class="t" style="left:630px;top:121px;letter-spacing:-0.25px;">islam</span>
<span class="t" style="left:3px;top:151px;">5</span>
<span class="t" style="left:48.0px;top:151px;letter-spacing:-0.54px;">13....</span>
<span class="t" style="left:79px;top:151px;">melvyn</span>
<span class="t" style="left:152px;top:151px;letter-spacing:-0.24px;">carole</span>
<span class="t" style="left:226px;top:151px;letter-spacing:-0.01px;">bahrain</span>
<span class="t" style="left:300px;top:151px;letter-spacing:0.66px;">gfh</span>
<span class="t" style="left:366px;top:151px;letter-spacing:-0.25px;">levis</span>
<span class="t" style="left:432px;top:151px;letter-spacing:-0.21px;">harvey</span>
<span class="t" style="left:498px;top:151px;letter-spacing:0.2px;">ofcom</span>
<span class="t" style="left:564px;top:151px;letter-spacing:-0.3px;">broadcasts</span>
<span class="t" style="left:630px;top:151px;letter-spacing:-0.5px;">harassm...</span>
<span class="t" style="left:3px;top:181px;">6</span>
<span class="t" style="left:46.5px;top:181px;letter-spacing:-0.05px;">9.txt</span>
<span class="t" style="left:79px;top:181px;letter-spacing:0.06px;">brotherho...</span>
<span class="t" style="left:152px;top:181px;letter-spacing:-0.19px;">radicalised</span>
<span class="t" style="left:226px;top:181px;letter-spacing:-0.76px;">assad</span>
<span class="t" style="left:300px;top:181px;letter-spacing:-0.34px;">bashar</span>
<span class="t" style="left:366px;top:181px;letter-spacing:0.16px;">bloomberg</span>
<span class="t" style="left:432px;top:181px;letter-spacing:-0.23px;">extremism</span>
<span class="t" style="left:498px;top:181px;letter-spacing:0.49px;">putin</span>
<span class="t" style="left:564px;top:181px;letter-spacing:-0.06px;">ukraine</span>
<span class="t" style="left:630px;top:181px;letter-spacing:-0.25px;">islam</span>
<span class="t" style="left:3px;top:211px;">7</span>
<span class="t" style="left:46.5px;top:211px;letter-spacing:-0.05px;">2.txt</span>
<span class="t" style="left:79px;top:211px;letter-spacing:0.06px;">brotherho...</span>
<span class="t" style="left:152px;top:211px;letter-spacing:0.09px;">jihadist</span>
<span class="t" style="left:226px;top:211px;letter-spacing:-0.45px;">isis</span>
<span class="t" style="left:300px;top:211px;letter-spacing:-0.23px;">extremism</span>
<span class="t" style="left:366px;top:211px;letter-spacing:-0.25px;">islam</span>
<span class="t" style="left:432px;top:211px;letter-spacing:-0.38px;">assertive</span>
<span class="t" style="left:498px;top:211px;letter-spacing:0.19px;">ideology</span>
<span class="t" style="left:564px;top:211px;">muslim</span>
<span class="t" style="left:630px;top:211px;letter-spacing:0.08px;">sunni</span>
</div>
<div class="sbv" style="left:1233px;top:329px;width:17px;height:215px;"></div>
<svg style="left:1239px;top:336px" width="7" height="4" viewBox="0 0 7 4" shape-rendering="crispEdges"><path d="M3 0h1v1h-1z M2 1h3v1h-3z M1 2h5v1h-5z M0 3h7v1h-7z" fill="url(#ag)"/></svg>
<svg style="left:1239px;top:534px" width="7" height="4" viewBox="0 0 7 4" shape-rendering="crispEdges"><path d="M0 0h7v1h-7z M1 1h5v1h-5z M2 2h3v1h-3z M3 3h1v1h-1z" fill="url(#ag)"/></svg>
<div class="thv" style="left:1234px;top:347px;width:15px;height:52px;"></div>
<div class="" style="left:1238px;top:369px;width:7px;height:1px;background:linear-gradient(90deg,#2a2a2a,#8a8a8a);"></div>
<div class="" style="left:1238px;top:370px;width:7px;height:1px;background:rgba(255,255,255,.85);"></div>
<div class="" style="left:1238px;top:372px;width:7px;height:1px;background:linear-gradient(90deg,#2a2a2a,#8a8a8a);"></div>
<div class="" style="left:1238px;top:373px;width:7px;height:1px;background:rgba(255,255,255,.85);"></div>
<div class="" style="left:1238px;top:375px;width:7px;height:1px;background:linear-gradient(90deg,#2a2a2a,#8a8a8a);"></div>
<div class="" style="left:1238px;top:376px;width:7px;height:1px;background:rgba(255,255,255,.85);"></div>
<div class="sbh" style="left:550px;top:544px;width:683px;height:17px;"></div>
<svg style="left:556px;top:549px" width="4" height="7" viewBox="0 0 4 7" shape-rendering="crispEdges"><path d="M3 0h1v1h-1z M2 1h2v1h-2z M1 2h3v1h-3z M0 3h4v1h-4z M1 4h3v1h-3z M2 5h2v1h-2z M3 6h1v1h-1z" fill="url(#ag)"/></svg>
<svg style="left:1223px;top:549px" width="4" height="7" viewBox="0 0 4 7" shape-rendering="crispEdges"><path d="M0 0h1v1h-1z M0 1h2v1h-2z M0 2h3v1h-3z M0 3h4v1h-4z M0 4h3v1h-3z M0 5h2v1h-2z M0 6h1v1h-1z" fill="url(#ag)"/></svg>
<div class="thh" style="left:568px;top:545px;width:251px;height:15px;"></div>
<div class="" style="left:689px;top:549px;width:1px;height:7px;background:linear-gradient(#2a2a2a,#8a8a8a);"></div>
<div class="" style="left:690px;top:549px;width:1px;height:7px;background:rgba(255,255,255,.85);"></div>
<div class="" style="left:692px;top:549px;width:1px;height:7px;background:linear-gradient(#2a2a2a,#8a8a8a);"></div>
<div class="" style="left:693px;top:549px;width:1px;height:7px;background:rgba(255,255,255,.85);"></div>
<div class="" style="left:695px;top:549px;width:1px;height:7px;background:linear-gradient(#2a2a2a,#8a8a8a);"></div>
<div class="" style="left:696px;top:549px;width:1px;height:7px;background:rgba(255,255,255,.85);"></div>
<div class="" style="left:1233px;top:544px;width:17px;height:17px;background:#f0f0f0;"></div>
<div class="" style="left:550px;top:544px;width:683px;height:1px;background:#fbfbfb;"></div>
<div class="tbl" style="left:549px;top:567px;width:702px;height:234px;"></div>
<div style="left:550px;top:568px;width:683px;height:232px;overflow:hidden;">
<div class="hd" style="left:0px;top:0px;width:683px;height:22px;border-right:none;"></div>
<div class="hd" style="left:0px;top:0px;width:29px;height:22px;"></div>
<div class="hd" style="left:29px;top:0px;width:85px;height:22px;"></div>
<div class="hd" style="left:114px;top:0px;width:60px;height:22px;"></div>
<div class="hd" style="left:174px;top:0px;width:80px;height:22px;"></div>
<div class="hdsel" style="left:254px;top:0px;width:69px;height:22px;"></div>
<svg style="left:285px;top:1px" width="7" height="4" viewBox="0 0 7 4" shape-rendering="crispEdges"><path d="M0 0h7v1h-7z M1 1h5v1h-5z M2 2h3v1h-3z M3 3h1v1h-1z" fill="url(#hg)"/></svg>
<div class="rh" style="left:0px;top:22px;width:29px;height:30px;"></div>
<div class="gh" style="left:29px;top:52px;width:294px;height:1px;"></div>
<div class="rh" style="left:0px;top:52px;width:29px;height:30px;"></div>
<div class="gh" style="left:29px;top:82px;width:294px;height:1px;"></div>
<div class="rh" style="left:0px;top:82px;width:29px;height:30px;"></div>
<div class="gh" style="left:29px;top:112px;width:294px;height:1px;"></div>
<div class="rh" style="left:0px;top:112px;width:29px;height:30px;"></div>
<div class="gh" style="left:29px;top:142px;width:294px;height:1px;"></div>
<div class="rh" style="left:0px;top:142px;width:29px;height:30px;"></div>
<div class="gh" style="left:29px;top:172px;width:294px;height:1px;"></div>
<div class="rh" style="left:0px;top:172px;width:29px;height:30px;"></div>
<div class="gh" style="left:29px;top:202px;width:294px;height:1px;"></div>
<div class="rh" style="left:0px;top:202px;width:29px;height:30px;"></div>
<div class="gh" style="left:29px;top:232px;width:294px;height:1px;"></div>
<div class="gv" style="left:113px;top:23px;width:1px;height:210px;"></div>
<div class="gv" style="left:173px;top:23px;width:1px;height:210px;"></div>
<div class="gv" style="left:253px;top:23px;width:1px;height:210px;"></div>
<div class="gv" style="left:322px;top:23px;width:1px;height:210px;"></div>
<span class="t" style="left:33px;top:5px;letter-spacing:-0.11px;">Keyword</span>
<span class="t" style="left:147.0px;top:5px;letter-spacing:-0.56px;">Freq</span>
<span class="t" style="left:208.0px;top:5px;letter-spacing:-0.67px;">Keyness</span>
<span class="t" style="left:289.5px;top:5px;letter-spacing:-0.19px;">Effect</span>
<span class="t" style="left:3px;top:31px;">1</span>
<span class="t" style="left:32px;top:31px;letter-spacing:0.12px;">batten</span>
<span class="t" style="left:158.0px;top:31px;letter-spacing:-1.36px;">17</span>
<span class="t" style="left:211.0px;top:31px;letter-spacing:-0.73px;">130.038</span>
<span class="t" style="left:280.0px;top:31px;letter-spacing:-0.73px;">1523.18</span>
<span class="t" style="left:3px;top:61px;">2</span>
<span class="t" style="left:32px;top:61px;letter-spacing:0.1px;">babolat</span>
<span class="t" style="left:158.0px;top:61px;letter-spacing:-1.36px;">14</span>
<span class="t" style="left:211.0px;top:61px;letter-spacing:-0.73px;">107.088</span>
<span class="t" style="left:280.0px;top:61px;letter-spacing:-0.73px;">1254.39</span>
<span class="t" style="left:3px;top:91px;">3</span>
<span class="t" style="left:32px;top:91px;letter-spacing:0.26px;">joffrey</span>
<span class="t" style="left:158.0px;top:91px;letter-spacing:-1.36px;">12</span>
<span class="t" style="left:211.0px;top:91px;letter-spacing:-0.73px;">91.7888</span>
<span class="t" style="left:280.0px;top:91px;letter-spacing:-0.73px;">1075.19</span>
<span class="t" style="left:3px;top:121px;">4</span>
<span class="t" style="left:32px;top:121px;letter-spacing:0.25px;">tulle</span>
<span class="t" style="left:163.3px;top:121px;">9</span>
<span class="t" style="left:211.0px;top:121px;letter-spacing:-0.73px;">68.8404</span>
<span class="t" style="left:280.0px;top:121px;letter-spacing:-0.73px;">806.391</span>
<span class="t" style="left:3px;top:151px;">5</span>
<span class="t" style="left:32px;top:151px;letter-spacing:-0.09px;">farah</span>
<span class="t" style="left:163.3px;top:151px;">9</span>
<span class="t" style="left:211.0px;top:151px;letter-spacing:-0.73px;">68.8404</span>
<span class="t" style="left:280.0px;top:151px;letter-spacing:-0.73px;">806.391</span>
<span class="t" style="left:3px;top:181px;">6</span>
<span class="t" style="left:32px;top:181px;letter-spacing:0.18px;">kundnani</span>
<span class="t" style="left:163.3px;top:181px;">9</span>
<span class="t" style="left:211.0px;top:181px;letter-spacing:-0.73px;">68.8404</span>
<span class="t" style="left:280.0px;top:181px;letter-spacing:-0.73px;">806.391</span>
<span class="t" style="left:3px;top:211px;">7</span>
<span class="t" style="left:32px;top:211px;letter-spacing:-0.76px;">sansa</span>
<span class="t" style="left:163.3px;top:211px;">7</span>
<span class="t" style="left:217.0px;top:211px;letter-spacing:-0.74px;">53.542</span>
<span class="t" style="left:280.0px;top:211px;letter-spacing:-0.73px;">627.193</span>
</div>
<div class="sbv" style="left:1233px;top:568px;width:17px;height:232px;"></div>
<svg style="left:1239px;top:575px" width="7" height="4" viewBox="0 0 7 4" shape-rendering="crispEdges"><path d="M3 0h1v1h-1z M2 1h3v1h-3z M1 2h5v1h-5z M0 3h7v1h-7z" fill="url(#ag)"/></svg>
<svg style="left:1239px;top:790px" width="7" height="4" viewBox="0 0 7 4" shape-rendering="crispEdges"><path d="M0 0h7v1h-7z M1 1h5v1h-5z M2 2h3v1h-3z M3 3h1v1h-1z" fill="url(#ag)"/></svg>
<div class="thv" style="left:1234px;top:586px;width:15px;height:16px;"></div>
<div class="" style="left:1255px;top:820px;width:1px;height:1px;background:#fff;"></div>
<div class="" style="left:1256px;top:821px;width:1px;height:1px;background:#a8a8a8;"></div>
<div class="" style="left:1252px;top:823px;width:1px;height:1px;background:#fff;"></div>
<div class="" style="left:1253px;top:824px;width:1px;height:1px;background:#a8a8a8;"></div>
<div class="" style="left:1255px;top:823px;width:1px;height:1px;background:#fff;"></div>
<div class="" style="left:1256px;top:824px;width:1px;height:1px;background:#a8a8a8;"></div>
<div class="" style="left:1249px;top:826px;width:1px;height:1px;background:#fff;"></div>
<div class="" style="left:1250px;top:827px;width:1px;height:1px;background:#a8a8a8;"></div>
<div class="" style="left:1252px;top:826px;width:1px;height:1px;background:#fff;"></div>
<div class="" style="left:1253px;top:827px;width:1px;height:1px;background:#a8a8a8;"></div>
<div class="" style="left:1255px;top:826px;width:1px;height:1px;background:#fff;"></div>
<div class="" style="left:1256px;top:827px;width:1px;height:1px;background:#a8a8a8;"></div>
</body></html>
